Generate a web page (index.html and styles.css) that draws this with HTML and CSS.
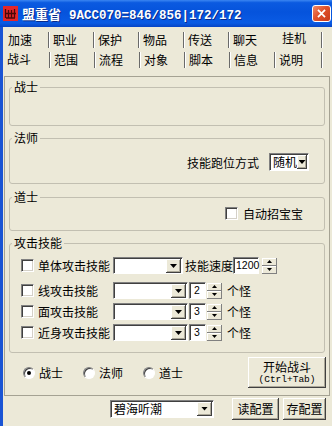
FILE: index.html
```html
<!DOCTYPE html>
<html lang="zh-CN">
<head>
    <meta charset="UTF-8">
    <title>盟重省</title>
    <link rel="stylesheet" href="styles.css">
</head>
<body>
    <div class="titlebar">
        <svg class="app-icon" viewBox="0 0 15 15">
            <rect width="15" height="15" fill="#e3262a"/>
            <path d="M2.5 3v9M5.5 4v8M8.5 4v8M11.5 3v9M2 7.5h11M3 12h9" stroke="#4a0808" stroke-width="1.3"/>
        </svg>
        <span class="title"><span class="title-cn">盟重省</span><span class="title-num">9ACC070=846/856|172/172</span></span>
        <span class="close-btn">
            <svg viewBox="0 0 19 17"><path d="M5.5 4.5l8 8M13.5 4.5l-8 8" stroke="#fff" stroke-width="2"/></svg>
        </span>
    </div>

    <div class="frame">
        <!-- outer tabs -->
        <div class="tabs tabs-outer">
            <span class="tab first">加速</span>
            <span class="tab">职业</span>
            <span class="tab">保护</span>
            <span class="tab">物品</span>
            <span class="tab">传送</span>
            <span class="tab no-sep">聊天</span>
            <span class="tab active">挂机</span>
        </div>
        <!-- inner tabs -->
        <div class="tabs tabs-inner">
            <span class="tab first selected">战斗</span>
            <span class="tab">范围</span>
            <span class="tab">流程</span>
            <span class="tab">对象</span>
            <span class="tab">脚本</span>
            <span class="tab">信息</span>
            <span class="tab last">说明</span>
        </div>

        <div class="page">
            <fieldset class="group group-warrior">
                <legend>战士</legend>
            </fieldset>

            <fieldset class="group group-mage">
                <legend>法师</legend>
                <div class="group-body right">
                    <span class="label">技能跑位方式</span>
                    <span class="combo combo-mode"><span class="combo-text">随机</span><span class="drop"><span class="arrow"></span></span></span>
                </div>
            </fieldset>

            <fieldset class="group group-taoist">
                <legend>道士</legend>
                <div class="group-body right">
                    <span class="check"></span>
                    <span class="label">自动招宝宝</span>
                </div>
            </fieldset>

            <fieldset class="group group-attack">
                <legend>攻击技能</legend>
                <div class="skill-rows">
                    <div class="skill-row first-row">
                        <span class="check"></span>
                        <span class="skill-name">单体攻击技能</span>
                        <span class="combo combo-skill short"><span class="combo-text"></span><span class="drop"><span class="arrow"></span></span></span>
                        <span class="label speed-label">技能速度</span>
                        <span class="edit edit-speed">1200</span>
                        <span class="spin"><span class="spin-btn"><span class="tiny up"></span></span><span class="spin-btn"><span class="tiny down"></span></span></span>
                    </div>
                    <div class="skill-row">
                        <span class="check"></span>
                        <span class="skill-name">线攻击技能</span>
                        <span class="combo combo-skill"><span class="combo-text"></span><span class="drop"><span class="arrow"></span></span></span>
                        <span class="edit edit-count">2</span>
                        <span class="spin"><span class="spin-btn"><span class="tiny up"></span></span><span class="spin-btn"><span class="tiny down"></span></span></span>
                        <span class="label unit">个怪</span>
                    </div>
                    <div class="skill-row">
                        <span class="check"></span>
                        <span class="skill-name">面攻击技能</span>
                        <span class="combo combo-skill"><span class="combo-text"></span><span class="drop"><span class="arrow"></span></span></span>
                        <span class="edit edit-count">3</span>
                        <span class="spin"><span class="spin-btn"><span class="tiny up"></span></span><span class="spin-btn"><span class="tiny down"></span></span></span>
                        <span class="label unit">个怪</span>
                    </div>
                    <div class="skill-row">
                        <span class="check"></span>
                        <span class="skill-name">近身攻击技能</span>
                        <span class="combo combo-skill"><span class="combo-text"></span><span class="drop"><span class="arrow"></span></span></span>
                        <span class="edit edit-count">3</span>
                        <span class="spin"><span class="spin-btn"><span class="tiny up"></span></span><span class="spin-btn"><span class="tiny down"></span></span></span>
                        <span class="label unit">个怪</span>
                    </div>
                </div>
            </fieldset>

            <div class="page-foot">
                <span class="radio-opt"><span class="radio checked"></span>战士</span>
                <span class="radio-opt"><span class="radio"></span>法师</span>
                <span class="radio-opt"><span class="radio"></span>道士</span>
                <span class="btn btn-start">
                    <span class="btn-line">开始战斗</span>
                    <span class="btn-key">(Ctrl+Tab)</span>
                </span>
            </div>
        </div>

        <div class="footer">
            <span class="combo combo-config"><span class="combo-text">碧海听潮</span><span class="drop"><span class="arrow"></span></span></span>
            <span class="btn btn-load">读配置</span>
            <span class="btn btn-save">存配置</span>
        </div>
    </div>
</body>
</html>
```

FILE: styles.css
```css
/* Base */
* {
    box-sizing: border-box;
}

body {
    margin: 0;
    width: 332px;
    height: 426px;
    overflow: hidden;
    background: #ece9d8;
    font-family: "Noto Sans CJK SC", "Liberation Sans", sans-serif;
    font-size: 12px;
    color: #000;
}

/* Title bar */
.titlebar {
    height: 27px;
    display: flex;
    align-items: center;
    padding-left: 3px;
    color: #fff;
    background: linear-gradient(to bottom, #3b86f2 0%, #0b5ae0 10%, #0553dc 45%, #0a5be4 85%, #0744c4 100%);
}

.app-icon {
    width: 15px;
    height: 15px;
    margin-right: 4px;
}

.title {
    flex: 1;
    font-weight: bold;
    white-space: nowrap;
    text-shadow: 1px 1px 0 #0a2a8a;
}

.title-cn {
    font-size: 13px;
}

.title-num {
    font-family: "Liberation Mono", monospace;
    font-size: 12.5px;
    margin-left: 8px;
}

.close-btn {
    width: 19px;
    height: 17px;
    margin-right: 1px;
    border: 1px solid #fff;
    border-radius: 3px;
    background: linear-gradient(135deg, #f08a6a 0%, #e0532c 45%, #c8391a 100%);
    display: flex;
}

.close-btn svg {
    width: 100%;
    height: 100%;
}

/* Window frame */
.frame {
    height: 399px;
    border-left: 3px solid #1a54d4;
    display: flex;
    flex-direction: column;
}

/* Tabs */
.tabs {
    display: flex;
    height: 20px;
    padding-top: 2px;
}

.tabs-outer {
    margin-top: 3px;
}

.tab {
    width: 45px;
    height: 16px;
    line-height: 16px;
    padding-left: 4px;
    border-right: 1px solid #6a6a6a;
    box-shadow: 1px 0 0 #fff;
    white-space: nowrap;
}

.tab.first {
    width: 46px;
    padding-left: 5px;
}

.tabs-inner .tab.first {
    width: 47px;
    padding-left: 4px;
}

.tab.last {
    width: 47px;
}

.tab.no-sep {
    border-right-color: transparent;
    box-shadow: none;
}

.tab.active {
    width: 48px;
    padding-left: 8px;
    line-height: 12px;
}

.tab.selected {
    line-height: 14px;
}

/* Tab page */
.page {
    height: 320px;
    margin: 6px 2px 0 1px;
    border: 1px solid #a5a293;
    padding: 3px 4px 0 4px;
    display: flex;
    flex-direction: column;
}

.group {
    margin: 0;
    padding: 0;
    border: 1px solid #c2bfb1;
    border-radius: 3px;
    min-width: 0;
}

.group legend {
    margin-left: 2px;
    padding: 0 2px;
    line-height: 14px;
}

.group-warrior {
    height: 46px;
}

.group-mage {
    height: 53px;
    margin-top: 5px;
}

.group-taoist {
    height: 41px;
    margin-top: 6px;
}

.group-attack {
    height: 117px;
    margin-top: 5px;
}

.group-body {
    display: flex;
    align-items: center;
}

.group-body.right {
    justify-content: flex-end;
}

.group-mage .group-body {
    padding: 8px 15px 0 0;
}

.group-mage .label {
    margin-right: 10px;
}

.group-taoist .group-body {
    padding: 1px 21px 0 0;
}

.group-taoist .check {
    margin-right: 5px;
}

/* Controls */
.check {
    width: 13px;
    height: 13px;
    background: #fff;
    border: 1px solid;
    border-color: #808080 #fff #fff #808080;
    box-shadow: inset 1px 1px 0 #404040, inset -1px -1px 0 #d4d0c8;
    flex-shrink: 0;
}

.combo {
    display: flex;
    height: 17px;
    background: #fff;
    border: 1px solid;
    border-color: #808080 #fff #fff #808080;
    box-shadow: inset 1px 1px 0 #404040;
    padding: 1px 1px 0 1px;
    flex-shrink: 0;
}

.combo-text {
    flex: 1;
    line-height: 14px;
    padding-left: 2px;
    white-space: nowrap;
}

.drop {
    width: 15px;
    height: 14px;
    background: #ece9d8;
    box-shadow: inset -1px -1px 0 #404040, inset 1px 1px 0 #fff, inset -2px -2px 0 #aca899;
    display: flex;
    align-items: center;
    justify-content: center;
}

.arrow {
    width: 7px;
    height: 4px;
    background: #000;
    clip-path: polygon(0 0, 100% 0, 50% 100%);
}

.combo-mode {
    width: 40px;
    height: 18px;
}

.edit {
    height: 17px;
    background: #fff;
    border: 1px solid;
    border-color: #808080 #fff #fff #808080;
    box-shadow: inset 1px 1px 0 #404040;
    font-family: "Liberation Sans", sans-serif;
    font-size: 10.5px;
    line-height: 15px;
    padding-left: 2px;
    flex-shrink: 0;
}

.spin {
    width: 15px;
    height: 16px;
    display: flex;
    flex-direction: column;
    flex-shrink: 0;
}

.spin-btn {
    flex: 1;
    background: #ece9d8;
    box-shadow: inset -1px -1px 0 #808080, inset 1px 1px 0 #fff;
    display: flex;
    align-items: center;
    justify-content: center;
}

.tiny {
    width: 5px;
    height: 3px;
    background: #000;
}

.tiny.up {
    clip-path: polygon(50% 0, 100% 100%, 0 100%);
}

.tiny.down {
    clip-path: polygon(0 0, 100% 0, 50% 100%);
}

/* Attack skill rows */
.skill-rows {
    padding: 7px 0 0 11px;
    display: flex;
    flex-direction: column;
    gap: 4px;
}

.skill-row {
    display: flex;
    align-items: center;
    height: 17px;
}

.skill-row.first-row {
    margin-bottom: 4px;
}

.skill-name {
    width: 79px;
    flex-shrink: 0;
    padding-left: 4px;
    white-space: nowrap;
}

.combo-skill {
    width: 75px;
}

.combo-skill.short {
    width: 70px;
}

.speed-label {
    margin-left: 2px;
    width: 48px;
    white-space: nowrap;
}

.edit-speed {
    width: 26px;
}

.edit-speed + .spin {
    margin-left: 3px;
}

.edit-count {
    width: 17px;
    margin-left: 1px;
    padding-left: 4px;
}

.edit-count + .spin {
    margin-left: 1px;
}

.unit {
    margin-left: 5px;
}

/* Bottom of the page */
.page-foot {
    display: flex;
    align-items: center;
    margin-top: 4px;
    padding-left: 14px;
}

.radio-opt {
    display: flex;
    align-items: center;
    gap: 4px;
    margin-right: 20px;
}

.radio {
    width: 12px;
    height: 12px;
    border-radius: 50%;
    background: #fff;
    border: 1px solid;
    border-color: #808080 #fff #fff #808080;
    box-shadow: inset 1px 1px 0 #404040;
    display: flex;
    align-items: center;
    justify-content: center;
}

.radio.checked::before {
    content: "";
    width: 4px;
    height: 4px;
    border-radius: 50%;
    background: #000;
}

.btn {
    background: #ece9d8;
    box-shadow: inset -1px -1px 0 #404040, inset 1px 1px 0 #fff, inset -2px -2px 0 #aca899;
    display: flex;
    align-items: center;
    justify-content: center;
    white-space: nowrap;
}

.btn-start {
    margin-left: auto;
    margin-right: -1px;
    width: 78px;
    height: 31px;
    flex-direction: column;
}

.btn-line {
    line-height: 15px;
}

.btn-key {
    font-family: "Liberation Mono", monospace;
    font-size: 9.5px;
    line-height: 12px;
}

/* Footer */
.footer {
    flex: 1;
    display: flex;
    align-items: center;
    justify-content: flex-end;
    padding: 0 6px 5px 0;
}

.combo-config {
    width: 104px;
    height: 18px;
    margin-right: 18px;
}

.btn-load {
    width: 47px;
    height: 22px;
    margin-right: 4px;
}

.btn-save {
    width: 43px;
    height: 22px;
}
```
